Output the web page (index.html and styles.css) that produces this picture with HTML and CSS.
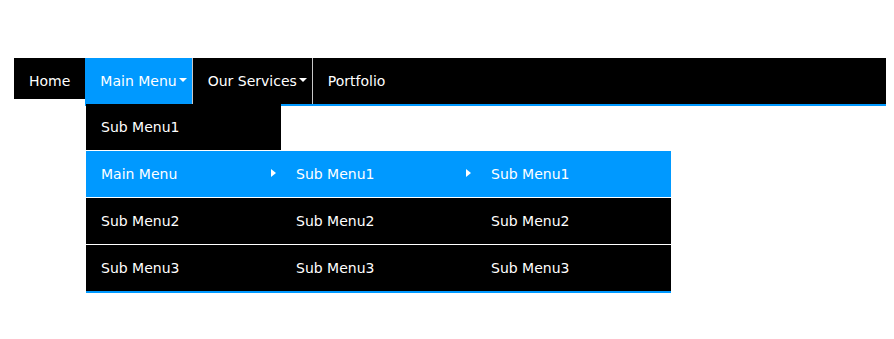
FILE: index.html
```html
<!doctype html>
<html>
    <head>
        <meta charset="utf-8">
        <title>Dropdown menu</title>
        <link rel="stylesheet" href="styles.css">
    </head>
    <body>
        <nav class="menubar">
            <a class="home" href="#">Home</a>
            <ul class="menu">
                <li class="menu-item active caret"><a href="#">Main Menu</a></li>
                <li class="menu-item sep caret"><a href="#">Our Services</a></li>
                <li class="menu-item sep"><a href="#">Portfolio</a></li>
            </ul>
        </nav>
        <div class="dropdown">
            <a class="drop-first" href="#">Sub Menu1</a>
            <div class="cascade">
                <a class="cell hover arrow" href="#">Main Menu</a>
                <a class="cell hover arrow" href="#">Sub Menu1</a>
                <a class="cell hover" href="#">Sub Menu1</a>
                <a class="cell" href="#">Sub Menu2</a>
                <a class="cell" href="#">Sub Menu2</a>
                <a class="cell" href="#">Sub Menu2</a>
                <a class="cell last" href="#">Sub Menu3</a>
                <a class="cell last" href="#">Sub Menu3</a>
                <a class="cell last" href="#">Sub Menu3</a>
            </div>
        </div>
    </body>
</html>
```

FILE: styles.css
```css
* {
    box-sizing: border-box;
}

body {
    margin: 0;
    padding: 58px 8px 0 14px;
    font-family: "DejaVu Sans", Verdana, sans-serif;
    font-size: 14px;
    background: #fff;
}

a {
    color: #fff;
    text-decoration: none;
}

.menubar {
    display: flex;
    align-items: flex-start;
}

.home {
    display: block;
    height: 41px;
    line-height: 46px;
    padding: 0 15px;
    background: #000;
}

.menu {
    display: flex;
    flex: 1;
    height: 48px;
    margin: 0;
    padding: 0;
    list-style: none;
    background: #000;
    border-bottom: 2px solid #0099ff;
}

.menu-item {
    position: relative;
    height: 46px;
    line-height: 46px;
    padding: 0 15px;
}

.menu-item.sep {
    border-left: 1px solid #c8c8c8;
}

.menu-item.active {
    background: #0099ff;
}

.menu-item.caret::after {
    content: "";
    position: absolute;
    top: 20px;
    right: 5px;
    border-top: 4px solid #fff;
    border-left: 4px solid transparent;
    border-right: 4px solid transparent;
}

/* dropdown sits under Main Menu and covers the bar's bottom line */
.dropdown {
    position: relative;
    width: 585px;
    margin: -2px 0 0 72px;
}

.drop-first,
.cell {
    display: block;
    height: 47px;
    line-height: 46px;
    padding: 0 15px;
    background: #000;
    border-bottom: 1px solid #fff;
    white-space: nowrap;
}

.drop-first {
    width: 195px;
}

.cascade {
    display: grid;
    grid-template-columns: repeat(3, 195px);
}

.cell {
    position: relative;
}

.cell.hover {
    background: #0099ff;
}

.cell.last {
    height: 48px;
    border-bottom: 2px solid #0099ff;
}

.cell.arrow::after {
    content: "";
    position: absolute;
    top: 18px;
    right: 5px;
    border-left: 5px solid #fff;
    border-top: 4px solid transparent;
    border-bottom: 4px solid transparent;
}
```
